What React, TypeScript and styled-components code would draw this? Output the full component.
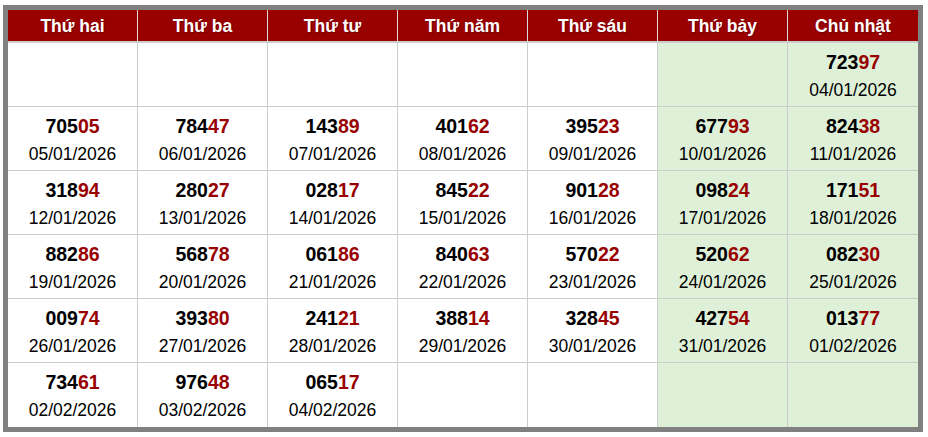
import styled, { createGlobalStyle } from "styled-components";

const GlobalStyle = createGlobalStyle`
  body {
    margin: 0;
    padding: 5px 0 0 3px;
    background: #ffffff;
    font-family: "Liberation Sans", Arial, sans-serif;
  }
`;

interface Draw {
  number: string;
  date: string;
}

const days = [
  "Thứ hai",
  "Thứ ba",
  "Thứ tư",
  "Thứ năm",
  "Thứ sáu",
  "Thứ bảy",
  "Chủ nhật",
];

const weeks: (Draw | null)[][] = [
  [null, null, null, null, null, null, { number: "72397", date: "04/01/2026" }],
  [
    { number: "70505", date: "05/01/2026" },
    { number: "78447", date: "06/01/2026" },
    { number: "14389", date: "07/01/2026" },
    { number: "40162", date: "08/01/2026" },
    { number: "39523", date: "09/01/2026" },
    { number: "67793", date: "10/01/2026" },
    { number: "82438", date: "11/01/2026" },
  ],
  [
    { number: "31894", date: "12/01/2026" },
    { number: "28027", date: "13/01/2026" },
    { number: "02817", date: "14/01/2026" },
    { number: "84522", date: "15/01/2026" },
    { number: "90128", date: "16/01/2026" },
    { number: "09824", date: "17/01/2026" },
    { number: "17151", date: "18/01/2026" },
  ],
  [
    { number: "88286", date: "19/01/2026" },
    { number: "56878", date: "20/01/2026" },
    { number: "06186", date: "21/01/2026" },
    { number: "84063", date: "22/01/2026" },
    { number: "57022", date: "23/01/2026" },
    { number: "52062", date: "24/01/2026" },
    { number: "08230", date: "25/01/2026" },
  ],
  [
    { number: "00974", date: "26/01/2026" },
    { number: "39380", date: "27/01/2026" },
    { number: "24121", date: "28/01/2026" },
    { number: "38814", date: "29/01/2026" },
    { number: "32845", date: "30/01/2026" },
    { number: "42754", date: "31/01/2026" },
    { number: "01377", date: "01/02/2026" },
  ],
  [
    { number: "73461", date: "02/02/2026" },
    { number: "97648", date: "03/02/2026" },
    { number: "06517", date: "04/02/2026" },
    null,
    null,
    null,
    null,
  ],
];

export default function App() {
  return (
    <>
      <GlobalStyle />
      <Frame>
        <Grid>
          {days.map((day) => (
            <HeadCell key={day}>{day}</HeadCell>
          ))}
          {weeks.map((week, w) =>
            week.map((draw, d) => (
              <Cell key={`${w}-${d}`} $weekend={d >= 5}>
                {draw && (
                  <>
                    <Number>
                      {draw.number.slice(0, 3)}
                      <Tail>{draw.number.slice(3)}</Tail>
                    </Number>
                    <DateText>{draw.date}</DateText>
                  </>
                )}
              </Cell>
            ))
          )}
        </Grid>
      </Frame>
    </>
  );
}

const Frame = styled.div`
  display: inline-block;
  border: 5px solid #808080;
`;

const Grid = styled.div`
  display: grid;
  grid-template-columns: repeat(7, 130px);
  grid-template-rows: 33px;
  grid-auto-rows: 64px;
`;

const HeadCell = styled.div`
  display: flex;
  align-items: center;
  justify-content: center;
  padding-top: 1px;
  background: #990000;
  color: #ffffff;
  font-weight: 700;
  font-size: 17.5px;
  border-right: 1px solid #d9d9d9;
  border-bottom: 2px solid #cccccc;
  text-shadow: 1px 1px 0 rgba(0, 0, 0, 0.25);
  &:nth-child(7) {
    border-right: none;
  }
`;

const Cell = styled.div<{ $weekend: boolean }>`
  display: flex;
  flex-direction: column;
  align-items: center;
  justify-content: center;
  gap: 5px;
  padding-top: 1px;
  background: ${(p) => (p.$weekend ? "#dff0d8" : "#ffffff")};
  border-right: 1px solid #cccccc;
  border-bottom: 1px solid #cccccc;
  &:nth-child(7n) {
    border-right: none;
  }
  &:nth-last-child(-n + 7) {
    border-bottom: none;
  }
`;

const Number = styled.div`
  font-weight: 700;
  font-size: 19.5px;
  color: #000000;
  line-height: 24px;
`;

const Tail = styled.span`
  color: #990000;
`;

const DateText = styled.div`
  font-size: 17.5px;
  color: #000000;
  line-height: 22px;
`;
